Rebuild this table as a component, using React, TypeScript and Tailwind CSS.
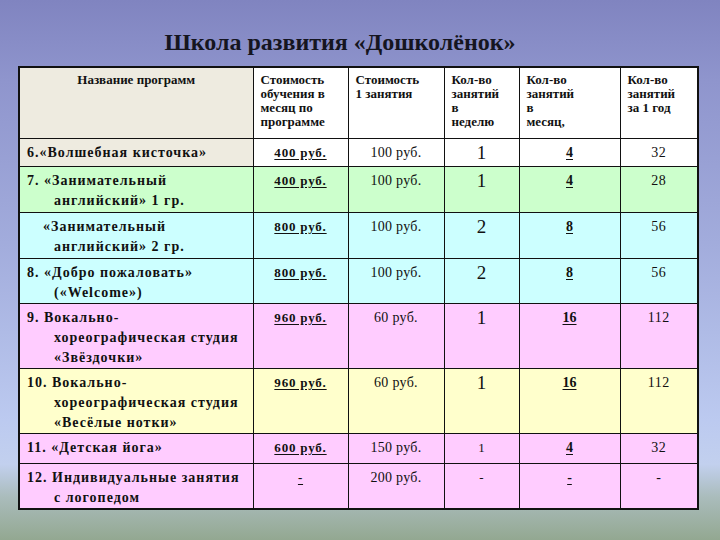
type Row = {
  lines: string[];
  firstIndent?: string;
  price: string;
  single: string;
  week: string;
  weekSmall?: boolean;
  month: string;
  year: string;
  bg: string;
  nameBg?: string;
  height: string;
};

const rows: Row[] = [
  {
    lines: ["6.«Волшебная кисточка»"],
    price: "400 руб.",
    single: "100 руб.",
    week: "1",
    month: "4",
    year: "32",
    bg: "bg-white",
    nameBg: "bg-[#eeebe0]",
    height: "h-[28px]",
  },
  {
    lines: ["7. «Занимательный", "английский» 1 гр."],
    price: "400 руб.",
    single: "100 руб.",
    week: "1",
    month: "4",
    year: "28",
    bg: "bg-[#ccffcc]",
    height: "h-[46px]",
  },
  {
    lines: ["«Занимательный", "английский» 2 гр."],
    firstIndent: "pl-[16px]",
    price: "800 руб.",
    single: "100 руб.",
    week: "2",
    month: "8",
    year: "56",
    bg: "bg-[#ccffff]",
    height: "h-[46px]",
  },
  {
    lines: ["8. «Добро пожаловать»", "(«Welcome»)"],
    price: "800 руб.",
    single: "100 руб.",
    week: "2",
    month: "8",
    year: "56",
    bg: "bg-[#ccffff]",
    height: "h-[45px]",
  },
  {
    lines: ["9. Вокально-", "хореографическая студия", "«Звёздочки»"],
    price: "960 руб.",
    single: "60 руб.",
    week: "1",
    month: "16",
    year: "112",
    bg: "bg-[#ffccff]",
    height: "h-[65px]",
  },
  {
    lines: ["10. Вокально-", "хореографическая студия", "«Весёлые нотки»"],
    price: "960 руб.",
    single: "60 руб.",
    week: "1",
    month: "16",
    year: "112",
    bg: "bg-[#ffffcc]",
    height: "h-[65px]",
  },
  {
    lines: ["11. «Детская йога»"],
    price: "600 руб.",
    single: "150 руб.",
    week: "1",
    weekSmall: true,
    month: "4",
    year: "32",
    bg: "bg-[#ffccff]",
    height: "h-[30px]",
  },
  {
    lines: ["12. Индивидуальные занятия", "с логопедом"],
    price: "-",
    single: "200 руб.",
    week: "-",
    weekSmall: true,
    month: "-",
    year: "-",
    bg: "bg-[#ffccff]",
    height: "h-[45px]",
  },
];

const headBase = "border border-[#111] align-top pt-[5px] text-[13px] font-bold leading-[14px]";
const headCell = `${headBase} bg-white pl-[7px] text-left`;
const cell = "border border-[#111] align-top pt-[4px] leading-[20px] text-center";

export default function App() {
  return (
    <div className="flex h-[540px] w-[720px] flex-col overflow-hidden bg-[linear-gradient(180deg,#8084c0_0%,#8f95cd_15%,#a2acdc_45%,#bccaf0_78%,#c2d0ee_86%,#aabcbc_92%,#93a891_100%)] [font-family:'Liberation_Serif',serif] text-[#111]">
      <div className="flex h-[66px] justify-center pr-[40px] pt-[27px]">
        <h1 className="text-[24px] font-bold leading-[30px] text-[#151520]">Школа развития «Дошколёнок»</h1>
      </div>

      <table className="ml-[18px] w-[679px] table-fixed border-collapse border-2 border-[#111]">
        <colgroup>
          <col className="w-[234px]" />
          <col className="w-[95px]" />
          <col className="w-[96px]" />
          <col className="w-[75px]" />
          <col className="w-[101px]" />
          <col className="w-[78px]" />
        </colgroup>
        <thead>
          <tr className="h-[71px]">
            <th className={`${headBase} bg-[#eeebe0] text-center`}>Название программ</th>
            <th className={headCell}>
              Стоимость
              <br />
              обучения в
              <br />
              месяц по
              <br />
              программе
            </th>
            <th className={headCell}>
              Стоимость
              <br />1 занятия
            </th>
            <th className={headCell}>
              Кол-во
              <br />
              занятий
              <br />в<br />
              неделю
            </th>
            <th className={headCell}>
              Кол-во
              <br />
              занятий
              <br />в<br />
              месяц,
            </th>
            <th className={headCell}>
              Кол-во
              <br />
              занятий
              <br />
              за 1 год
            </th>
          </tr>
        </thead>
        <tbody>
          {rows.map((r, i) => (
            <tr key={i} className={`${r.height} ${r.bg}`}>
              <td className={`border border-[#111] align-top pl-[7px] pt-[4px] text-[14px] font-bold leading-[20px] tracking-[1px] whitespace-nowrap ${r.nameBg ?? ""}`}>
                {r.lines.map((line, j) => (
                  <div key={j} className={j === 0 ? (r.firstIndent ?? "") : "pl-[27px]"}>
                    {line}
                  </div>
                ))}
              </td>
              <td className={`${cell} text-[13px] font-bold tracking-[0.8px]`}>
                <span className="underline underline-offset-2">{r.price}</span>
              </td>
              <td className={`${cell} text-[14px] tracking-[0.3px]`}>{r.single}</td>
              <td className={`${cell} ${r.weekSmall ? "text-[13px]" : "text-[19px]"}`}>{r.week}</td>
              <td className={`${cell} text-[14px] font-bold`}>
                <span className="underline underline-offset-2">{r.month}</span>
              </td>
              <td className={`${cell} text-[14px] tracking-[0.5px]`}>{r.year}</td>
            </tr>
          ))}
        </tbody>
      </table>
    </div>
  );
}
